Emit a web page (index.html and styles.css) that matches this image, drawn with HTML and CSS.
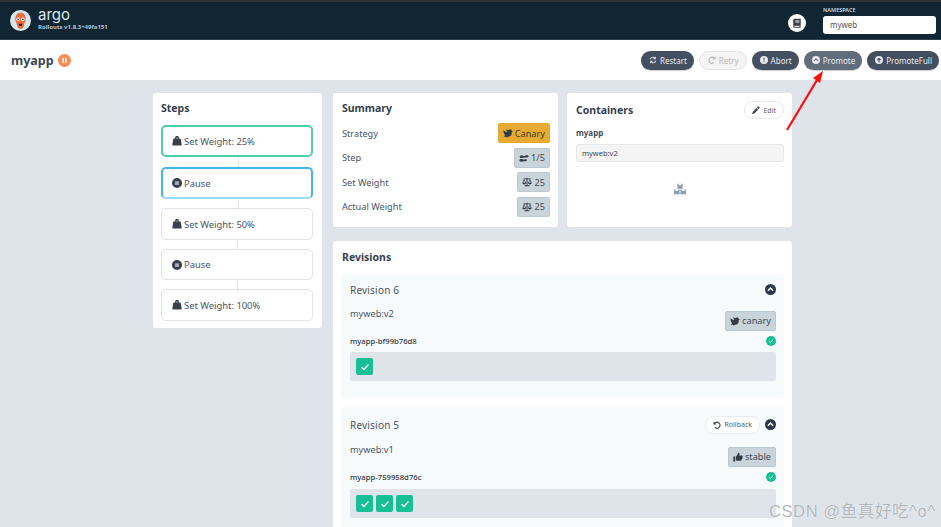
FILE: index.html
```html
<!DOCTYPE html>
<html>
<head>
    <title>myapp - Argo Rollouts</title>
    <link rel="stylesheet" href="styles.css">
</head>
<body>
    <svg class="defs" xmlns="http://www.w3.org/2000/svg">
        <symbol id="i-weight" viewBox="0 0 16 16"><path fill-rule="evenodd" d="M3 4H5.300A3 3 0 1 1 10.700 4H13c.5 0 .9.3 1 .8L15.500 14c.1.6-.3 1-1 1H1.500c-.7 0-1.100-.4-1-1L2 4.800c.1-.5.5-.8 1-.8zM8 2.200a1 1 0 1 0 0 2 1 1 0 0 0 0-2z"/></symbol>
        <symbol id="i-pause" viewBox="0 0 16 16"><path fill-rule="evenodd" d="M8 0a8 8 0 1 1 0 16A8 8 0 0 1 8 0zM5.500 5v6h1.800V5zm3.200 0v6h1.800V5z"/></symbol>
        <symbol id="i-dove" viewBox="0 0 16 16"><path d="M11.500 2.500c1.300 0 2.300.8 2.500 2l2 1-2 1V8c0 3.500-2.500 6-6 6l-2 1.500-1-1.500H1l2.500-3C1.500 9.500.5 7 .8 3c1.500 2 3.500 3 5.700 3.300V5.500L5 1.500l3 2c.8-.7 2-1 3.500-1z"/></symbol>
        <symbol id="i-shoes" viewBox="0 0 16 16"><path d="M1 5.800C1 4.500 3 3.800 5 4c1 .1 1.800.8 2.800.8 1 0 2.200-1 4.200-1.300 1.700-.2 3.500.5 3.500 1.500S13.800 7 12 7H8c-1 0-2 .8-3.500.8C2.500 7.800 1 7 1 5.800z"/><path d="M.5 11.500c0-1.200 1.800-1.800 3.500-1.800 1.300 0 2.500.7 3.500.7l3-.5c1.500 0 2 .8 2 1.600s-.7 1.700-2 1.700H7c-1 0-2 .6-3.200.6-1.800 0-3.300-.9-3.300-2.300z"/></symbol>
        <symbol id="i-scale" viewBox="0 0 16 16"><path d="M7.200 1h1.600v1.300H14v1.400h-1.100l2.600 5.800c0 1.300-1.300 2.300-2.900 2.300s-2.900-1-2.900-2.300l2.600-5.800H8.800V13h3v1.800H4.200V13h3V3.700H3.800l2.600 5.800c0 1.300-1.300 2.300-2.900 2.300S.6 10.800.6 9.500L3.200 3.700H2V2.300h5.200zM3.500 5.200 1.900 9.300h3.200zm9 0-1.600 4.100h3.200z"/></symbol>
        <symbol id="i-thumb" viewBox="0 0 16 16"><path d="M.5 7h3v8h-3zM4.700 7.200c1.300-1 2.500-2.500 3-4.300.2-.9.400-1.700 1.200-1.700 1.300 0 1.800 1.300 1.600 2.600-.1.700-.4 1.300-.7 1.900h4.200c.9 0 1.500.7 1.500 1.500 0 .5-.3 1-.6 1.200.3.300.4.700.3 1.100-.1.500-.4.800-.7 1 .1.400.1.900-.2 1.200-.2.300-.4.500-.7.600.1.900-.5 1.700-1.500 1.700H8.500c-1.400 0-2.500-.7-3.800-1z"/></symbol>
        <symbol id="i-restart" viewBox="0 0 16 16"><path d="M13.500 1v5.500H8l2.200-2.200A4.500 4.500 0 0 0 3.600 6.500H1.400a6.700 6.700 0 0 1 10.400-3.800zM2.500 15V9.500H8l-2.200 2.200a4.500 4.500 0 0 0 6.600-2.200h2.200a6.700 6.700 0 0 1-10.400 3.800z"/></symbol>
        <symbol id="i-redo" viewBox="0 0 16 16"><path d="M15 1v6h-6l2.200-2.200A4.800 4.800 0 1 0 11.300 12l1.600 1.500A7 7 0 1 1 12.800 3.200z"/></symbol>
        <symbol id="i-undo" viewBox="0 0 16 16"><path d="M1 1v6h6L4.800 4.800A4.800 4.800 0 1 1 4.700 12l-1.600 1.500A7 7 0 1 0 3.200 3.200z"/></symbol>
        <symbol id="i-alert" viewBox="0 0 16 16"><path fill-rule="evenodd" d="M8 0a8 8 0 1 1 0 16A8 8 0 0 1 8 0zM6.900 3.500l.3 5.800h1.600l.3-5.800zM8 10.300a1.200 1.200 0 1 0 0 2.400 1.200 1.200 0 0 0 0-2.400z"/></symbol>
        <symbol id="i-chevron" viewBox="0 0 16 16"><path fill-rule="evenodd" d="M8 0a8 8 0 1 1 0 16A8 8 0 0 1 8 0zM8 4.500 3.400 9.100l1.500 1.500L8 7.500l3.100 3.100 1.500-1.500z"/></symbol>
        <symbol id="i-uparrow" viewBox="0 0 16 16"><path fill-rule="evenodd" d="M8 0a8 8 0 1 1 0 16A8 8 0 0 1 8 0zM8 3 3.200 7.800 4.700 9.200 6.800 7.100V13h2.400V7.100l2.100 2.100 1.500-1.400z"/></symbol>
        <symbol id="i-pencil" viewBox="0 0 16 16"><path d="M11.300 1.200a1.500 1.500 0 0 1 2.100 0l1.400 1.400a1.500 1.500 0 0 1 0 2.100l-1.700 1.700-3.500-3.500zM8.700 3.800l3.500 3.500-7.800 7.800L.5 16l.9-3.900z"/></symbol>
        <symbol id="i-book" viewBox="0 0 16 16"><path fill-rule="evenodd" d="M4 1h9.500c.3 0 .5.200.5.500v10c0 .3-.2.500-.4.600-.2.500-.2 1.300 0 1.800.2.100.4.300.4.500v.5c0 .3-.2.500-.5.500H4a2 2 0 0 1-2-2V3a2 2 0 0 1 2-2zm1.300 3v1h6.500V4zm0 2v1h6.500V6zM4 12.300a.9.900 0 0 0 0 1.700h8c-.1-.6-.1-1.200 0-1.700z"/></symbol>
        <symbol id="i-boxes" viewBox="0 0 16 16"><path d="M4.500 1h2v2h3V1h2v6.500h-7zM0 8.500h2v2h3v-2h2.500V15H0zM8.500 8.500H11v2h3v-2h2V15H8.500z"/></symbol>
        <symbol id="i-check" viewBox="0 0 16 16"><path fill="none" stroke="currentColor" stroke-width="2" d="M2.500 8.500 6.200 12l7.300-8"/></symbol>
    </svg>

    <header class="topbar">
        <div class="brand">
            <svg class="logo" viewBox="0 0 20 20">
                <circle cx="10" cy="10" r="10" fill="#d6e6ea"/>
                <path d="M5 9c0-4 2-6.500 5-6.500S15 5 15 9c0 2-1 3-1.500 4.500-.5 2-.5 4-3.500 4.500-3-.5-3-2.500-3.500-4.500C6 12 5 11 5 9z" fill="#e96d3e"/>
                <circle cx="7.800" cy="8.800" r="1.700" fill="#fff"/>
                <circle cx="12.200" cy="8.800" r="1.700" fill="#fff"/>
                <circle cx="7.800" cy="8.800" r=".8" fill="#222"/>
                <circle cx="12.200" cy="8.800" r=".8" fill="#222"/>
                <path d="M8.200 13h3.600l-.6 2.200H8.800z" fill="#40191a"/>
            </svg>
            <div>
                <div class="brand-name">argo</div>
                <div class="brand-version">Rollouts v1.8.3+49fa151</div>
            </div>
        </div>
        <div class="top-actions">
            <span class="doc-link"><svg class="icon"><use href="#i-book"/></svg></span>
            <div class="namespace">
                <label>NAMESPACE</label>
                <div class="namespace-input">myweb</div>
            </div>
        </div>
    </header>

    <div class="subbar">
        <div class="app-title">
            <span>myapp</span>
            <svg class="icon status-pause"><use href="#i-pause"/></svg>
        </div>
        <div class="actions">
            <button class="action"><svg class="icon"><use href="#i-restart"/></svg>Restart</button>
            <button class="action disabled"><svg class="icon"><use href="#i-redo"/></svg>Retry</button>
            <button class="action"><svg class="icon"><use href="#i-alert"/></svg>Abort</button>
            <button class="action hover"><svg class="icon"><use href="#i-chevron"/></svg>Promote</button>
            <button class="action"><svg class="icon"><use href="#i-uparrow"/></svg>PromoteFull</button>
        </div>
    </div>

    <main class="content">
        <section class="card steps">
            <h3>Steps</h3>
            <div class="step done"><svg class="icon"><use href="#i-weight"/></svg>Set Weight: 25%</div>
            <div class="step current"><svg class="icon"><use href="#i-pause"/></svg>Pause</div>
            <div class="step"><svg class="icon"><use href="#i-weight"/></svg>Set Weight: 50%</div>
            <div class="step short"><svg class="icon"><use href="#i-pause"/></svg>Pause</div>
            <div class="step"><svg class="icon"><use href="#i-weight"/></svg>Set Weight: 100%</div>
        </section>

        <div class="right-col">
            <div class="top-cards">
                <section class="card summary">
                    <h3>Summary</h3>
                    <div class="row"><span>Strategy</span><span class="tag yellow"><svg class="icon"><use href="#i-dove"/></svg>Canary</span></div>
                    <div class="row"><span>Step</span><span class="tag"><svg class="icon"><use href="#i-shoes"/></svg>1/5</span></div>
                    <div class="row"><span>Set Weight</span><span class="tag"><svg class="icon"><use href="#i-scale"/></svg>25</span></div>
                    <div class="row"><span>Actual Weight</span><span class="tag"><svg class="icon"><use href="#i-scale"/></svg>25</span></div>
                </section>

                <section class="card containers">
                    <div class="containers-head">
                        <h3>Containers</h3>
                        <button class="pill"><svg class="icon"><use href="#i-pencil"/></svg>Edit</button>
                    </div>
                    <div class="container-name">myapp</div>
                    <div class="container-image">myweb:v2</div>
                    <svg class="icon boxes"><use href="#i-boxes"/></svg>
                </section>
            </div>

            <section class="card revisions">
                <h3>Revisions</h3>

                <div class="revision">
                    <div class="revision-head">
                        <span class="revision-title">Revision 6</span>
                        <svg class="icon toggle"><use href="#i-chevron"/></svg>
                    </div>
                    <div class="revision-image">
                        <span>myweb:v2</span>
                        <span class="tag"><svg class="icon"><use href="#i-dove"/></svg>canary</span>
                    </div>
                    <div class="replicaset">
                        <span>myapp-bf99b76d8</span>
                        <span class="ok"><svg class="icon"><use href="#i-check"/></svg></span>
                    </div>
                    <div class="pods">
                        <span class="pod"><svg class="icon"><use href="#i-check"/></svg></span>
                    </div>
                </div>

                <div class="revision">
                    <div class="revision-head">
                        <span class="revision-title">Revision 5</span>
                        <div class="revision-tools">
                            <button class="pill"><svg class="icon"><use href="#i-undo"/></svg>Rollback</button>
                            <svg class="icon toggle"><use href="#i-chevron"/></svg>
                        </div>
                    </div>
                    <div class="revision-image">
                        <span>myweb:v1</span>
                        <span class="tag"><svg class="icon"><use href="#i-thumb"/></svg>stable</span>
                    </div>
                    <div class="replicaset">
                        <span>myapp-759958d76c</span>
                        <span class="ok"><svg class="icon"><use href="#i-check"/></svg></span>
                    </div>
                    <div class="pods">
                        <span class="pod"><svg class="icon"><use href="#i-check"/></svg></span>
                        <span class="pod"><svg class="icon"><use href="#i-check"/></svg></span>
                        <span class="pod"><svg class="icon"><use href="#i-check"/></svg></span>
                    </div>
                </div>
            </section>
        </div>
    </main>

    <svg class="arrow" viewBox="0 0 941 527">
        <path d="M787 130 817 80" stroke="#fb0d0d" stroke-width="2.200" fill="none"/>
        <path d="M823 71 813 78 820 83z" fill="#fb0d0d"/>
    </svg>
    <div class="watermark">CSDN @鱼真好吃^o^</div>
</body>
</html>
```

FILE: styles.css
```css
* {
    box-sizing: border-box;
}
html, body {
    margin: 0;
    height: 527px;
    overflow: hidden;
}
body {
    position: relative;
    font-family: "Noto Sans", Arial, sans-serif;
    background: #dee4ea;
    color: #3b4654;
}
h3 {
    margin: 0;
    font-size: 10.500px;
    font-weight: 700;
    color: #363f4b;
}
.defs {
    display: none;
}
.icon {
    width: 1em;
    height: 1em;
    fill: currentColor;
    flex: none;
}

/* top bar */
.topbar {
    height: 40px;
    background: #102633;
    border-top: 2px solid #333;
    border-bottom: 1px solid #2d4250;
    display: flex;
    justify-content: space-between;
    align-items: center;
    padding: 0 5px 0 10px;
}
.brand {
    display: flex;
    align-items: center;
    gap: 7px;
}
.logo {
    width: 21px;
    height: 21px;
}
.brand-name {
    font-family: "Inter", sans-serif;
    font-size: 15px;
    line-height: 15px;
    color: #dfe8ee;
    margin-top: -3px;
}
.brand-version {
    font-size: 6px;
    font-weight: 700;
    line-height: 9px;
    color: #b5c4d0;
    margin-top: 1px;
}
.top-actions {
    display: flex;
    align-items: center;
    gap: 17px;
}
.doc-link {
    width: 18px;
    height: 18px;
    border-radius: 50%;
    background: #fff;
    color: #3a3f47;
    font-size: 10px;
    display: flex;
    align-items: center;
    justify-content: center;
    margin-top: 4px;
}
.namespace label {
    display: block;
    font-size: 5.500px;
    font-weight: 600;
    line-height: 7px;
    color: #cfdae2;
    margin-bottom: 2px;
}
.namespace-input {
    width: 113px;
    height: 18px;
    background: #fff;
    border-radius: 3px;
    font-size: 8px;
    line-height: 18px;
    padding-left: 7px;
    color: #555;
}

/* app bar */
.subbar {
    height: 40px;
    background: #fff;
    display: flex;
    justify-content: space-between;
    align-items: center;
    padding: 0 2px 0 11px;
}
.app-title {
    display: flex;
    align-items: center;
    gap: 4px;
    font-size: 12.500px;
    font-weight: 700;
    color: #3c4652;
}
.status-pause {
    font-size: 13px;
    color: #f78b54;
}
.actions {
    display: flex;
    gap: 5px;
}
.action {
    height: 19px;
    padding: 0 7px 0 8px;
    border: 0;
    border-radius: 10px;
    background: #444f5f;
    color: #e8ecf0;
    font-family: inherit;
    font-size: 8px;
    display: flex;
    align-items: center;
    gap: 3px;
    box-shadow: 0 1px 1px rgba(0, 0, 0, .2);
}
.action .icon {
    font-size: 8px;
}
.action.disabled {
    background: #f4f4f4;
    color: #b8b8b8;
    border: 1px solid #e4e4e4;
    box-shadow: none;
}
.action.hover {
    background: #616d7d;
}

/* page */
.content {
    display: flex;
    align-items: flex-start;
    gap: 11px;
    padding: 13px 0 0 153px;
}
.card {
    background: #fff;
    border-radius: 3px;
    padding: 9px;
}
.steps {
    width: 169px;
    height: 235px;
    padding: 8px;
}
.steps h3 {
    margin-bottom: 9px;
    line-height: 15px;
}
.step {
    position: relative;
    height: 32px;
    width: 152px;
    margin-bottom: 9px;
    border: 1px solid #dee4ea;
    border-radius: 5px;
    display: flex;
    align-items: center;
    gap: 2px;
    padding-left: 10px;
    font-size: 9.400px;
    color: #4b5563;
}
.step .icon {
    font-size: 10px;
    color: #363f4b;
}
.step:not(:last-child)::after {
    content: "";
    position: absolute;
    left: 75px;
    top: 31px;
    width: 1px;
    height: 10px;
    background: #dee4ea;
}
.step.done {
    border: 2px solid #4fcfa6;
    padding-left: 9px;
    margin-bottom: 10px;
}
.step.current {
    border: 2px solid #3fb6ec;
    border-bottom-color: #9bdcf5;
    padding-left: 9px;
}
.step.short {
    height: 31px;
}
.right-col {
    width: 459px;
    display: flex;
    flex-direction: column;
    gap: 14px;
}
.top-cards {
    display: flex;
    gap: 9px;
}
.summary {
    width: 225px;
    height: 134px;
    padding: 8px 8px 0 9px;
}
.summary h3 {
    line-height: 15px;
    margin-bottom: 7px;
}
.row {
    display: flex;
    justify-content: space-between;
    align-items: center;
    height: 20px;
    margin-bottom: 4.500px;
    font-size: 9.200px;
    color: #4b5563;
}
.tag {
    height: 20px;
    padding: 0 4px;
    border-radius: 2px;
    border: 1px solid #bcc8d1;
    background: #c9d3da;
    display: inline-flex;
    align-items: center;
    gap: 2px;
    font-size: 9.200px;
    color: #414b58;
}
.tag .icon {
    font-size: 10px;
    color: #333b47;
}
.tag.yellow {
    background: #e8ab32;
    border-color: #e8ab32;
    color: #3d3a30;
}
.containers {
    width: 225px;
    height: 134px;
    padding: 8px 8px 0 9px;
}
.containers-head {
    display: flex;
    justify-content: space-between;
    align-items: center;
    height: 18px;
}
.pill {
    height: 18px;
    padding: 0 7px;
    background: #fff;
    border: 1px solid #e8ecef;
    border-radius: 9px;
    font-family: inherit;
    font-size: 7px;
    color: #555f6b;
    display: flex;
    align-items: center;
    gap: 3px;
}
.pill .icon {
    font-size: 8px;
    color: #3a424d;
}
.container-name {
    margin-top: 8px;
    font-size: 8px;
    font-weight: 700;
    line-height: 12px;
    color: #46505c;
}
.container-image {
    margin-top: 5px;
    height: 18px;
    background: #f4f4f4;
    border: 1px solid #e6e8ea;
    border-radius: 3px;
    font-size: 7.500px;
    line-height: 16px;
    padding-left: 5px;
    color: #444;
}
.boxes {
    display: block;
    margin: 21px auto 0;
    font-size: 12px;
    color: #8aa0b2;
}
.revisions {
    height: 300px;
    padding: 9px 8px 8px;
}
.revisions h3 {
    line-height: 15px;
    margin-bottom: 9px;
    padding-left: 1px;
}
.revision {
    background: #f6fafb;
    border-radius: 3px;
    padding: 7px 8px 0 9px;
    height: 124px;
    margin-bottom: 9px;
}
.revision + .revision {
    padding-top: 9px;
}
.revision + .revision .revision-image {
    margin-top: 10px;
}
.revision + .revision .pods {
    margin-top: 4px;
}
.revision-head {
    display: flex;
    justify-content: space-between;
    align-items: center;
    height: 17px;
    font-size: 10px;
    color: #4b5563;
}
.revision-title {
    letter-spacing: .2px;
}
.revision-tools {
    display: flex;
    align-items: center;
    gap: 5px;
}
.toggle {
    font-size: 11px;
    color: #2f3645;
}
.revision-image {
    display: flex;
    justify-content: space-between;
    align-items: flex-start;
    margin-top: 9px;
    height: 24px;
    font-size: 9.200px;
    line-height: 14px;
    color: #4b5563;
}
.revision-image .tag {
    margin-top: 4px;
}
.replicaset {
    display: flex;
    justify-content: space-between;
    align-items: center;
    height: 16px;
    margin-top: 2px;
    font-size: 7.700px;
    font-weight: 500;
    color: #2f3640;
}
.ok {
    width: 10px;
    height: 10px;
    border-radius: 50%;
    background: #18be94;
    color: #fff;
    font-size: 6px;
    display: flex;
    align-items: center;
    justify-content: center;
}
.pods {
    margin-top: 3px;
    height: 29px;
    background: #dee4ea;
    border-radius: 2px;
    padding: 6px;
    display: flex;
    gap: 3px;
}
.pod {
    width: 17px;
    height: 17px;
    border-radius: 2px;
    background: #18be94;
    color: #fff;
    font-size: 10px;
    display: flex;
    align-items: center;
    justify-content: center;
}

/* annotations on top of the screenshot */
.arrow {
    position: absolute;
    left: 0;
    top: 0;
    width: 941px;
    height: 527px;
    pointer-events: none;
}
.watermark {
    position: absolute;
    left: 769px;
    top: 501px;
    font-family: "Liberation Sans", "Noto Sans CJK SC", sans-serif;
    font-size: 16.500px;
    letter-spacing: .6px;
    line-height: 20px;
    white-space: nowrap;
    color: #b4b8bc;
    text-shadow: 0 0 1px #fff;
}
```
